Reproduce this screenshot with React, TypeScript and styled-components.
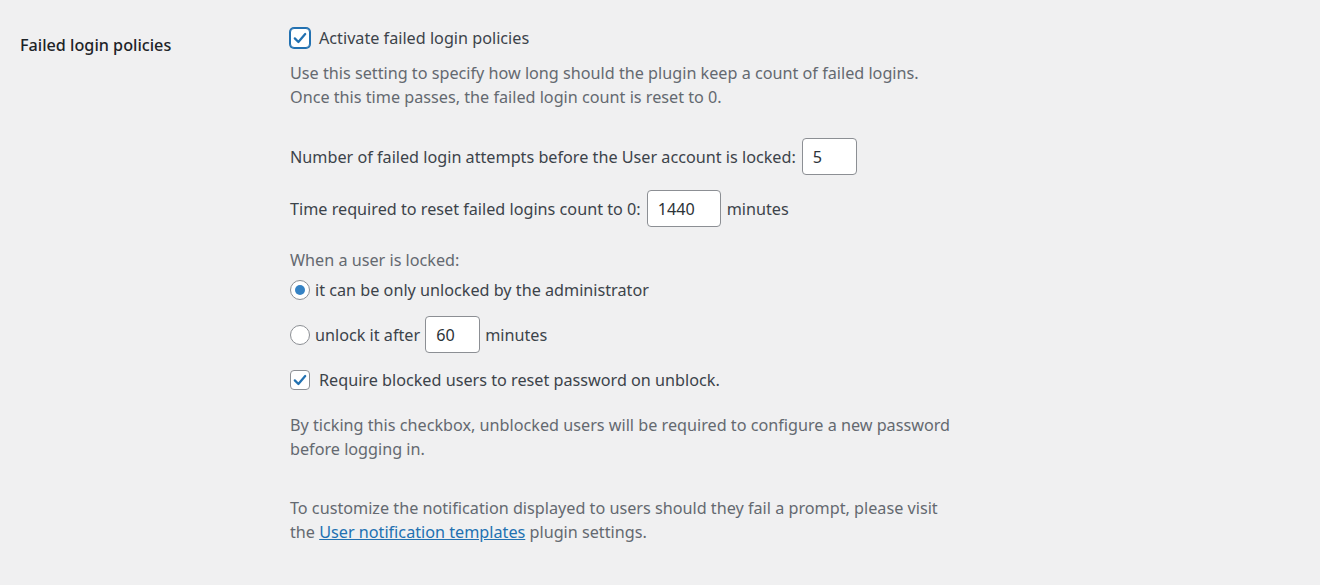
import styled, { createGlobalStyle } from "styled-components";

const GlobalStyle = createGlobalStyle`
  html, body {
    margin: 0;
    padding: 0;
    background: #f0f0f1;
  }
  body {
    font-family: "Noto Sans", "Liberation Sans", sans-serif;
    font-size: 16.2px;
    color: #1d2327;
  }
`;

const Page = styled.div`
  display: grid;
  grid-template-columns: 270px 1fr;
  padding: 26px 0 0 20px;
  min-height: 585px;
  box-sizing: border-box;
`;

const RowLabel = styled.div`
  font-weight: 500;
  line-height: 24px;
  padding-top: 7px;
`;

const Field = styled.div`
  display: flex;
  flex-direction: column;
  align-items: flex-start;
`;

const Line = styled.label<{ $mt?: number; $gap?: number }>`
  display: flex;
  align-items: center;
  gap: ${(p) => p.$gap ?? 6}px;
  line-height: 24px;
  color: #3c434a;
  margin-top: ${(p) => p.$mt ?? 0}px;
  white-space: nowrap;
`;

const Description = styled.p<{ $mt?: number }>`
  margin: ${(p) => p.$mt ?? 0}px 0 0;
  line-height: 24px;
  color: #646970;
  white-space: nowrap;
`;

const Box = styled.span<{ $focused?: boolean }>`
  width: 20px;
  height: 20px;
  box-sizing: border-box;
  border-radius: 4px;
  background: #fff;
  border: 1px solid ${(p) => (p.$focused ? "#2271b1" : "#8c8f94")};
  box-shadow: ${(p) => (p.$focused ? "0 0 0 1px #2271b1" : "none")};
  display: inline-flex;
  align-items: center;
  justify-content: center;
  flex-shrink: 0;
  margin-right: 3px;
`;

const Radio = styled.span<{ $checked?: boolean }>`
  width: 20px;
  height: 20px;
  box-sizing: border-box;
  border-radius: 50%;
  background: #fff;
  border: 1px solid #8c8f94;
  display: inline-flex;
  align-items: center;
  justify-content: center;
  flex-shrink: 0;
  &::after {
    content: "";
    display: ${(p) => (p.$checked ? "block" : "none")};
    width: 10px;
    height: 10px;
    border-radius: 50%;
    background: #3582c4;
  }
`;

const NumberInput = styled.span<{ $w: number }>`
  display: inline-flex;
  align-items: center;
  box-sizing: border-box;
  width: ${(p) => p.$w}px;
  height: 37px;
  padding: 0 10px;
  background: #fff;
  border: 1px solid #8c8f94;
  border-radius: 4px;
  color: #2c3338;
`;

const Link = styled.a`
  color: #2271b1;
  text-decoration: underline;
`;

const Check = () => (
  <svg width="16" height="16" viewBox="0 0 20 20">
    <path
      d="M3.5 10.5 L8 15 L16.5 5"
      fill="none"
      stroke="#2271b1"
      strokeWidth="2.8"
      strokeLinecap="round"
      strokeLinejoin="round"
    />
  </svg>
);

export default function App() {
  return (
    <>
      <GlobalStyle />
      <Page>
        <RowLabel>Failed login policies</RowLabel>
        <Field>
          <Line $gap={6}>
            <Box $focused>
              <Check />
            </Box>
            Activate failed login policies
          </Line>
          <Description $mt={11}>
            Use this setting to specify how long should the plugin keep a count of failed logins.
            <br />
            Once this time passes, the failed login count is reset to 0.
          </Description>

          <Line $mt={29}>
            Number of failed login attempts before the User account is locked:
            <NumberInput $w={55}>5</NumberInput>
          </Line>

          <Line $mt={15}>
            Time required to reset failed logins count to 0:
            <NumberInput $w={74}>1440</NumberInput>
            minutes
          </Line>

          <Description $mt={21}>When a user is locked:</Description>

          <Line $mt={6} $gap={5}>
            <Radio $checked />
            it can be only unlocked by the administrator
          </Line>

          <Line $mt={14} $gap={5}>
            <Radio />
            unlock it after
            <NumberInput $w={55}>60</NumberInput>
            minutes
          </Line>

          <Line $mt={15}>
            <Box>
              <Check />
            </Box>
            Require blocked users to reset password on unblock.
          </Line>

          <Description $mt={21}>
            By ticking this checkbox, unblocked users will be required to configure a new password
            <br />
            before logging in.
          </Description>

          <Description $mt={35}>
            To customize the notification displayed to users should they fail a prompt, please visit
            <br />
            the <Link href="#">User notification templates</Link> plugin settings.
          </Description>
        </Field>
      </Page>
    </>
  );
}
